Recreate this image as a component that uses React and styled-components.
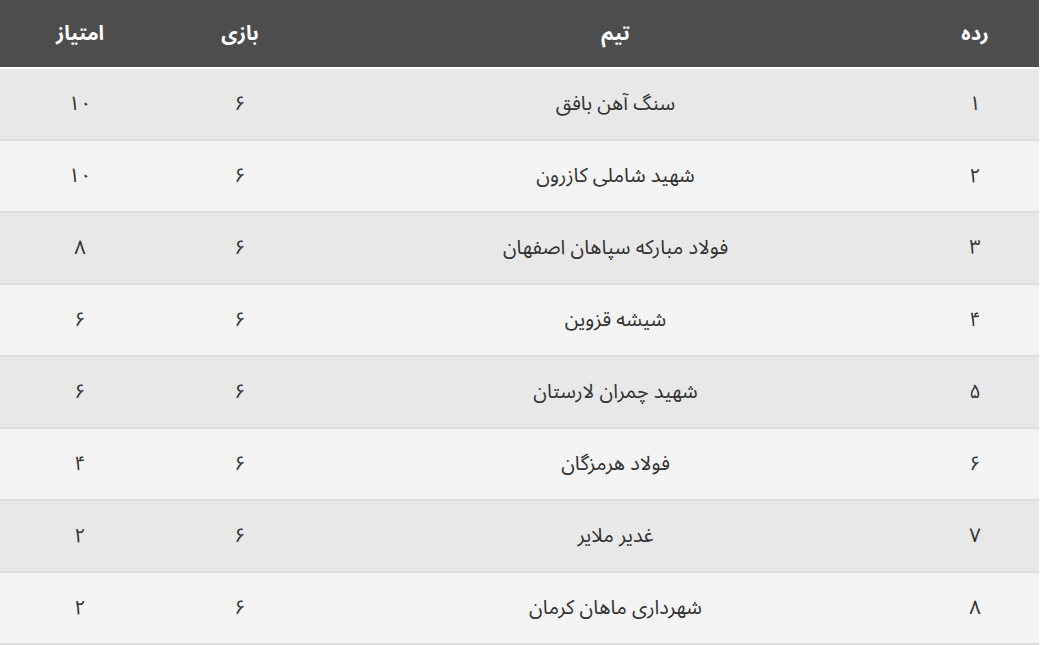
import React from 'react';
import styled, { createGlobalStyle } from 'styled-components';

const rows = [
  { rank: '۱', team: 'سنگ آهن بافق', played: '۶', points: '۱۰' },
  { rank: '۲', team: 'شهید شاملی کازرون', played: '۶', points: '۱۰' },
  { rank: '۳', team: 'فولاد مبارکه سپاهان اصفهان', played: '۶', points: '۸' },
  { rank: '۴', team: 'شیشه قزوین', played: '۶', points: '۶' },
  { rank: '۵', team: 'شهید چمران لارستان', played: '۶', points: '۶' },
  { rank: '۶', team: 'فولاد هرمزگان', played: '۶', points: '۴' },
  { rank: '۷', team: 'غدیر ملایر', played: '۶', points: '۲' },
  { rank: '۸', team: 'شهرداری ماهان کرمان', played: '۶', points: '۲' },
];

export default function App() {
  return (
    <>
      <GlobalStyle />
      <Wrapper>
        <Table>
          <colgroup>
            <col style={{ width: 128 }} />
            <col />
            <col style={{ width: 160 }} />
            <col style={{ width: 160 }} />
          </colgroup>
          <thead>
            <tr>
              <Th>رده</Th>
              <Th>تیم</Th>
              <Th>بازی</Th>
              <Th>امتیاز</Th>
            </tr>
          </thead>
          <tbody>
            {rows.map((r, i) => (
              <Row key={r.rank} odd={i % 2 === 0}>
                <Td>{r.rank}</Td>
                <Td>{r.team}</Td>
                <Td>{r.played}</Td>
                <Td>{r.points}</Td>
              </Row>
            ))}
          </tbody>
        </Table>
      </Wrapper>
    </>
  );
}

const GlobalStyle = createGlobalStyle`
  body {
    margin: 0;
    background: #ffffff;
    font-family: "Noto Sans Arabic", "DejaVu Sans", sans-serif;
  }
`;

const Wrapper = styled.div`
  width: 1039px;
  direction: rtl;
`;

const Table = styled.table`
  width: 100%;
  border-collapse: collapse;
  table-layout: fixed;
`;

const Th = styled.th`
  height: 67px;
  padding: 0 8px;
  background: #4d4d4d;
  color: #ffffff;
  font-size: 20px;
  font-weight: 700;
  text-align: center;
  border-bottom: 2px solid #ffffff;
`;

const Row = styled.tr`
  background: ${props => (props.odd ? '#e8e8e8' : '#f4f4f4')};
`;

const Td = styled.td`
  height: 70px;
  padding: 0 8px;
  color: #333333;
  font-size: 20px;
  text-align: center;
  border-bottom: 2px solid #dcdde0;
`;
